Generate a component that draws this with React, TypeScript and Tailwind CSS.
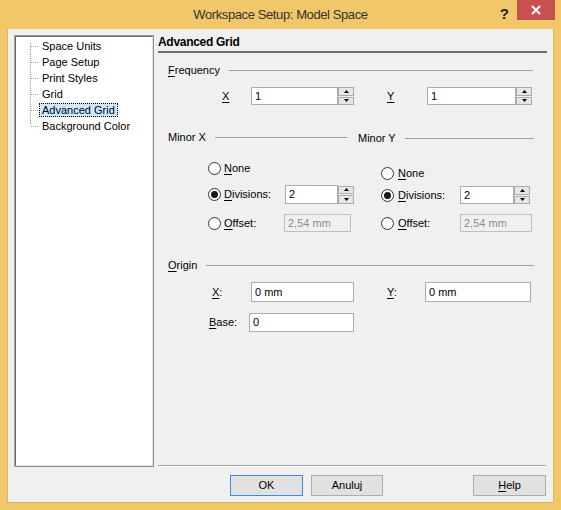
import React from "react";

const treeItems = ["Space Units", "Page Setup", "Print Styles", "Grid", "Advanced Grid", "Background Color"];

function U({ children }: { children: React.ReactNode }) {
  return <span className="underline underline-offset-2">{children}</span>;
}

function Spin() {
  return (
    <div className="flex flex-col w-[16px] h-[18px] gap-px">
      <div className="flex-1 flex items-center justify-center bg-[#e6e6e6] border border-[#acacac]">
        <svg width="5" height="3" viewBox="0 0 5 3">
          <path d="M2.5 0 L5 3 L0 3 Z" fill="#000" />
        </svg>
      </div>
      <div className="flex-1 flex items-center justify-center bg-[#e6e6e6] border border-[#acacac]">
        <svg width="5" height="3" viewBox="0 0 5 3">
          <path d="M0 0 L5 0 L2.5 3 Z" fill="#000" />
        </svg>
      </div>
    </div>
  );
}

function Field({ value, className, disabled }: { value: string; className: string; disabled?: boolean }) {
  return (
    <div
      className={`flex items-center pl-[3px] border ${
        disabled ? "bg-[#f0f0f0] border-[#bfbfbf] text-[#8d8d8d]" : "bg-white border-[#acacac] text-black"
      } ${className}`}
    >
      {value}
    </div>
  );
}

function Radio({ checked }: { checked?: boolean }) {
  return (
    <div className="w-[13px] h-[13px] rounded-full border border-[#333] bg-white flex items-center justify-center shrink-0">
      {checked && <div className="w-[7px] h-[7px] rounded-full bg-[#1a1a1a]" />}
    </div>
  );
}

function Section({ label, className }: { label: React.ReactNode; className: string }) {
  return (
    <div className={`flex items-center h-[14px] gap-[9px] ${className}`}>
      <span className="shrink-0">{label}</span>
      <div className="flex-1 h-px bg-[#a0a0a0]" />
    </div>
  );
}

function Button({ children, primary, className }: { children: React.ReactNode; primary?: boolean; className: string }) {
  return (
    <div
      className={`h-[21px] flex items-center justify-center bg-[#e1e1e1] border ${
        primary ? "border-[#3c8ce6]" : "border-[#adadad]"
      } ${className}`}
    >
      {children}
    </div>
  );
}

export default function App() {
  return (
    <div className="w-[561px] h-[510px] bg-[#f0c86a] flex flex-col px-[7px] pb-[7px] text-[11px] text-black font-['Liberation_Sans',Arial,sans-serif]">
      {/* title bar */}
      <div className="h-[29px] relative shrink-0">
        <div className="h-[29px] flex items-center justify-center text-[13px] text-[#333] tracking-[-0.4px]">
          Workspace Setup: Model Space
        </div>
        <div className="absolute top-0 right-[-1px] flex items-start">
          <span className="text-[15px] font-bold text-[#222] mt-[3px] mr-[8px]">?</span>
          <div className="w-[38px] h-[20px] bg-[#c75050] flex items-center justify-center">
            <svg width="10" height="10" viewBox="0 0 10 10">
              <path d="M1 1 L9 9 M9 1 L1 9" stroke="#fff" strokeWidth="2" />
            </svg>
          </div>
        </div>
      </div>

      {/* client area */}
      <div className="flex-1 bg-[#f0f0f0] border-l border-r border-b border-[#dcb660] flex flex-col pt-[6px] pl-[6px]">
        <div className="flex">
          {/* tree */}
          <div className="w-[140px] h-[432px] border border-t-[#a0a0a0] border-l-[#a0a0a0] border-r-[#8f8f8f] border-b-[#8f8f8f] bg-white">
            <div className="w-full h-full border border-t-[#696969] border-l-[#696969] border-r-[#e3e3e3] border-b-[#e3e3e3] pt-[1px] pl-px">
              {treeItems.map((item, i) => (
                <div key={item} className="flex items-center h-[16px]">
                  <svg width="22" height="16" viewBox="0 0 22 16" className="shrink-0">
                    <line
                      x1="13.5"
                      x2="13.5"
                      y1={i === 0 ? 5 : 0}
                      y2={i === treeItems.length - 1 ? 8 : 16}
                      stroke="#a0a0a0"
                      strokeDasharray="1 1"
                    />
                    <line x1="14" x2="22" y1="8.5" y2="8.5" stroke="#a0a0a0" strokeDasharray="1 1" />
                  </svg>
                  <span
                    className={`h-[14px] leading-[12px] px-[2px] border whitespace-nowrap ${
                      item === "Advanced Grid" ? "bg-[#cce8ff] border-dotted border-black" : "border-transparent"
                    }`}
                  >
                    {item}
                  </span>
                </div>
              ))}
            </div>
          </div>

          {/* right panel */}
          <div className="w-[389px] ml-[4px] h-[432px] flex flex-col">
            <div className="h-[18px] leading-[15px] text-[12px] font-bold tracking-[-0.3px] border-b-2 border-[#6d6d6d]">
              Advanced Grid
            </div>

            <Section className="mt-[10px] ml-[10px] mr-[14px]" label={<><U>F</U>requency</>} />

            <div className="flex items-center h-[18px] mt-[10px] pl-[64px]">
              <span className="w-[29px]"><U>X</U></span>
              <Field value="1" className="w-[87px] h-[18px]" />
              <Spin />
              <span className="w-[40px] ml-[33px]"><U>Y</U></span>
              <Field value="1" className="w-[89px] h-[18px]" />
              <Spin />
            </div>

            <div className="flex mt-[25px] ml-[10px]">
              <Section className="w-[179px]" label="Minor X" />
              <Section className="w-[176px] ml-[11px] mt-[1px]" label="Minor Y" />
            </div>

            <div className="flex ml-[50px]">
              {/* Minor X column */}
              <div className="w-[146px] flex flex-col">
                <div className="flex items-center h-[14px] mt-[16px] gap-[3px]">
                  <Radio />
                  <span><U>N</U>one</span>
                </div>
                <div className="flex items-center h-[19px] mt-[10px]">
                  <div className="w-[77px] flex items-center gap-[3px]">
                    <Radio checked />
                    <span><U>D</U>ivisions:</span>
                  </div>
                  <Field value="2" className="w-[53px] h-[19px]" />
                  <Spin />
                </div>
                <div className="flex items-center h-[18px] mt-[10px]">
                  <div className="w-[76px] flex items-center gap-[3px]">
                    <Radio />
                    <span><U>O</U>ffset:</span>
                  </div>
                  <Field value="2,54 mm" className="w-[67px] h-[18px]" disabled />
                </div>
              </div>
              {/* Minor Y column */}
              <div className="w-[160px] ml-[27px] flex flex-col">
                <div className="flex items-center h-[14px] mt-[21px] gap-[4px]">
                  <Radio />
                  <span><U>N</U>one</span>
                </div>
                <div className="flex items-center h-[18px] mt-[6px]">
                  <div className="w-[79px] flex items-center gap-[4px]">
                    <Radio checked />
                    <span><U>D</U>ivisions:</span>
                  </div>
                  <Field value="2" className="w-[54px] h-[18px]" />
                  <Spin />
                </div>
                <div className="flex items-center h-[18px] mt-[10px]">
                  <div className="w-[79px] flex items-center gap-[4px]">
                    <Radio />
                    <span><U>O</U>ffset:</span>
                  </div>
                  <Field value="2,54 mm" className="w-[72px] h-[18px]" disabled />
                </div>
              </div>
            </div>

            <Section className="mt-[26px] ml-[10px] mr-[13px]" label={<><U>O</U>rigin</>} />

            <div className="flex items-center h-[20px] mt-[10px] pl-[54px]">
              <span className="w-[39px]"><U>X</U>:</span>
              <Field value="0 mm" className="w-[103px] h-[20px]" />
              <span className="w-[38px] ml-[33px]"><U>Y</U>:</span>
              <Field value="0 mm" className="w-[106px] h-[20px]" />
            </div>

            <div className="flex items-center h-[19px] mt-[11px] pl-[51px]">
              <span className="w-[40px]"><U>B</U>ase:</span>
              <Field value="0" className="w-[105px] h-[19px]" />
            </div>

            <div className="mt-auto h-[2px] border-t border-[#a0a0a0] border-b border-b-white mr-px" />
          </div>
        </div>

        {/* buttons */}
        <div className="flex mt-[8px] ml-[216px]">
          <Button primary className="w-[73px]">OK</Button>
          <Button className="w-[72px] ml-[8px]">Anuluj</Button>
          <Button className="w-[73px] ml-[90px]"><U>H</U>elp</Button>
        </div>
      </div>
    </div>
  );
}
